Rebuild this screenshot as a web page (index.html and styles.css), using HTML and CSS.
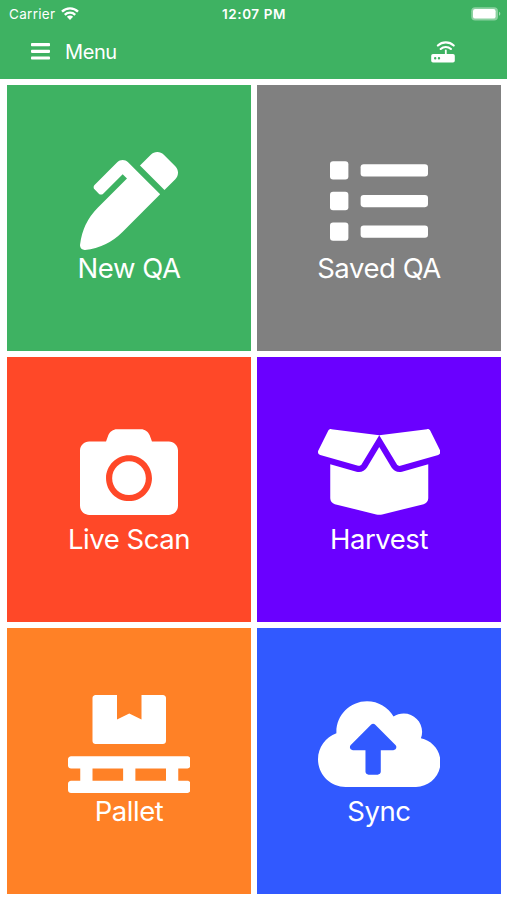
FILE: index.html
```html
<!DOCTYPE html>
<html lang="en">
<head>
    <meta charset="UTF-8">
    <meta name="viewport" content="width=device-width, initial-scale=1.0">
    <title>Menu</title>
    <link rel="stylesheet" href="styles.css">
</head>
<body>
    <header class="header">
        <div class="status-bar">
            <div class="carrier">
                <span class="carrier-name">Carrier</span>
                <svg class="wifi-icon" viewBox="0 0 18 13">
                    <path d="M1 4.7a11.4 11.4 0 0 1 16 0M3.8 7.8a7.4 7.4 0 0 1 10.4 0" fill="none" stroke="#fff" stroke-width="2.4"/>
                    <path d="M5.9 9.8a4.4 4.4 0 0 1 6.2 0L9 13z"/>
                </svg>
            </div>
            <div class="clock">12:07 PM</div>
            <svg class="battery-icon" viewBox="0 0 30 14">
                <rect x="0.2" y="0.2" width="26.8" height="13.2" rx="4" fill-opacity="0.4"/>
                <rect x="2" y="2" width="22.6" height="9.6" rx="2.2"/>
                <path d="M28 4.8v4c1.8-.6 1.8-3.4 0-4z" fill-opacity="0.5"/>
            </svg>
        </div>
        <nav class="nav-bar">
            <svg class="bars-icon" viewBox="0 0 19 17">
                <rect y="0" width="19" height="3.2" rx="0.8"/>
                <rect y="6.7" width="19" height="3.2" rx="0.8"/>
                <rect y="13.4" width="19" height="3.2" rx="0.8"/>
            </svg>
            <h1 class="title">Menu</h1>
            <svg class="router-icon" viewBox="0 0 24 22">
                <path d="M6.9 4.6a11.4 11.4 0 0 1 15.8 0M9.7 8a7.4 7.4 0 0 1 10.2 0" fill="none" stroke="#fff" stroke-width="2.1" stroke-linecap="round"/>
                <path d="M14.8 9.5v5" stroke="#fff" stroke-width="1.8" stroke-linecap="round"/>
                <path d="M2 13h20a1.8 1.8 0 0 1 1.8 1.8v5a1.8 1.8 0 0 1-1.8 1.8H2a1.8 1.8 0 0 1-1.8-1.8v-5A1.8 1.8 0 0 1 2 13zm2.2 3.1a1.2 1.2 0 1 0 0 2.4 1.2 1.2 0 0 0 0-2.4zm3.8 0a1.2 1.2 0 1 0 0 2.4 1.2 1.2 0 0 0 0-2.4z"/>
            </svg>
        </nav>
    </header>

    <main class="menu-grid">
        <a class="tile tile-new">
            <svg class="icon" viewBox="0 0 512 512">
                <path d="M497.94 74.17l-60.11-60.11c-18.75-18.75-49.16-18.75-67.91 0l-56.55 56.55 128.02 128.02 56.55-56.55c18.75-18.75 18.75-49.15 0-67.91zm-246.8-20.53c-15.62-15.62-40.94-15.62-56.56 0L75.8 172.43c-6.25 6.25-6.25 16.38 0 22.62l22.63 22.63c6.25 6.25 16.38 6.25 22.63 0l101.82-101.82 22.63 22.62L93.95 290.03A327.038 327.038 0 0 0 .17 485.11l-.03.23c-1.7 15.28 11.21 28.2 26.49 26.51a327.02 327.02 0 0 0 195.34-93.8l196.79-196.79-82.77-82.77-84.85-84.85z"/>
            </svg>
            <span class="label">New QA</span>
        </a>
        <a class="tile tile-saved">
            <svg class="icon" viewBox="0 0 512 512">
                <rect x="0" y="48" width="96" height="96" rx="16"/>
                <rect x="0" y="208" width="96" height="96" rx="16"/>
                <rect x="0" y="368" width="96" height="96" rx="16"/>
                <rect x="160" y="64" width="352" height="64" rx="16"/>
                <rect x="160" y="224" width="352" height="64" rx="16"/>
                <rect x="160" y="384" width="352" height="64" rx="16"/>
            </svg>
            <span class="label">Saved QA</span>
        </a>
        <a class="tile tile-scan">
            <svg class="icon" viewBox="0 0 512 512">
                <path d="M512 144v288c0 26.5-21.5 48-48 48H48c-26.5 0-48-21.5-48-48V144c0-26.5 21.5-48 48-48h88l12.3-32.9c7-18.7 24.9-31.1 44.9-31.1h125.5c20 0 37.9 12.4 44.9 31.1L376 96h88c26.5 0 48 21.5 48 48zM376 288c0-66.2-53.8-120-120-120s-120 53.8-120 120 53.8 120 120 120 120-53.8 120-120zm-32 0c0 48.5-39.5 88-88 88s-88-39.5-88-88 39.5-88 88-88 88 39.5 88 88z"/>
            </svg>
            <span class="label">Live Scan</span>
        </a>
        <a class="tile tile-harvest">
            <svg class="icon icon-wide" viewBox="0 0 640 512">
                <path d="M425.7 256c-16.9 0-32.8-9-41.4-23.4L320 126l-64.2 106.6c-8.7 14.5-24.6 23.5-41.5 23.5-4.5 0-9-.6-13.3-1.9L64 215v178c0 14.7 10 27.5 24.2 31l216.2 54.1c10.2 2.5 20.9 2.5 31 0L551.8 424c14.2-3.6 24.2-16.4 24.2-31V215l-137 39.1c-4.3 1.3-8.8 1.9-13.3 1.9zm212.6-112.2L586.8 41c-3.1-6.2-9.8-9.8-16.7-8.9L320 64l91.7 152.1c3.8 6.3 11.4 9.3 18.5 7.3l197.9-56.5c9.9-2.9 14.7-13.9 10.2-23.1zM53.2 41L1.7 143.8c-4.6 9.2.3 20.2 10.1 23l197.9 56.5c7.1 2 14.7-1 18.5-7.3L320 64 69.8 32.1c-6.9-.8-13.5 2.7-16.6 8.9z"/>
            </svg>
            <span class="label">Harvest</span>
        </a>
        <a class="tile tile-pallet">
            <svg class="icon icon-wide" viewBox="0 0 640 512">
                <path d="M144 256h352c8.8 0 16-7.2 16-16V16c0-8.8-7.2-16-16-16H384v128l-64-32-64 32V0H144c-8.8 0-16 7.2-16 16v224c0 8.8 7.2 16 16 16zm480 128c8.8 0 16-7.2 16-16v-32c0-8.8-7.2-16-16-16H16c-8.8 0-16 7.2-16 16v32c0 8.8 7.2 16 16 16h48v64H16c-8.8 0-16 7.2-16 16v32c0 8.8 7.2 16 16 16h608c8.8 0 16-7.2 16-16v-32c0-8.8-7.2-16-16-16h-48v-64h48zm-336 64H128v-64h160v64zm224 0H352v-64h160v64z"/>
            </svg>
            <span class="label">Pallet</span>
        </a>
        <a class="tile tile-sync">
            <svg class="icon icon-wide" viewBox="0 0 640 512">
                <path d="M537.6 226.6c4.1-10.7 6.4-22.4 6.4-34.6 0-53-43-96-96-96-19.7 0-38.1 6-53.3 16.2C367 64.2 315.3 32 256 32c-88.4 0-160 71.6-160 160 0 2.7.1 5.4.2 8.1C40.2 219.8 0 273.2 0 336c0 79.5 64.5 144 144 144h368c70.7 0 128-57.3 128-128 0-61.9-44-113.6-102.4-125.4zM393.4 288H328v112c0 8.8-7.2 16-16 16h-48c-8.8 0-16-7.2-16-16V288h-65.4c-14.3 0-21.4-17.2-11.3-27.3l105.4-105.4c6.2-6.2 16.4-6.2 22.6 0l105.4 105.4c10.1 10.1 2.9 27.3-11.3 27.3z"/>
            </svg>
            <span class="label">Sync</span>
        </a>
    </main>
</body>
</html>
```
FILE: styles.css
```css
* {
    box-sizing: border-box;
    margin: 0;
    padding: 0;
}

body {
    width: 507px;
    height: 900px;
    background-color: #fff;
    color: #fff;
    font-family: Inter, "Liberation Sans", sans-serif;
    overflow: hidden;
}

svg {
    display: block;
    fill: #fff;
}

.header {
    height: 79px;
    background-color: #3eb262;
}

/* Status bar */
.status-bar {
    display: grid;
    grid-template-columns: 1fr auto 1fr;
    align-items: center;
    height: 27px;
    padding: 0 6px 0 9px;
}

.carrier {
    display: flex;
    align-items: center;
    gap: 6px;
}

.carrier-name {
    font-size: 13.5px;
    letter-spacing: 0.3px;
}

.wifi-icon {
    width: 18px;
    height: 13px;
}

.clock {
    margin-right: 2px;
    font-size: 13.5px;
    font-weight: 600;
    letter-spacing: 0.55px;
}

.battery-icon {
    width: 30px;
    height: 14px;
    justify-self: end;
}

/* Navigation bar */
.nav-bar {
    display: flex;
    align-items: center;
    height: 49px;
    padding: 0 52px 0 31px;
}

.bars-icon {
    width: 19px;
    height: 17px;
}

.title {
    margin-left: 15px;
    font-size: 20px;
    font-weight: 400;
    letter-spacing: -0.4px;
}

.router-icon {
    width: 24px;
    height: 22px;
    margin-left: auto;
}

/* Menu tiles */
.menu-grid {
    display: grid;
    grid-template-columns: 1fr 1fr;
    grid-template-rows: repeat(3, 1fr);
    gap: 6px;
    height: 821px;
    padding: 6px 6px 6px 7px;
}

.tile {
    display: flex;
    flex-direction: column;
    align-items: center;
    padding-top: 66.5px;
}

.tile-new { background-color: #3eb262; }
.tile-saved { background-color: #808080; }
.tile-scan { background-color: #ff4828; }
.tile-harvest { background-color: #6a00ff; }
.tile-pallet { background-color: #ff8126; }
.tile-sync { background-color: #3159ff; }

.icon {
    width: 98px;
    height: 98px;
}

.icon-wide {
    width: 122.5px;
}

.label {
    font-size: 27.5px;
    line-height: 36px;
    letter-spacing: -0.45px;
    white-space: nowrap;
}
```
